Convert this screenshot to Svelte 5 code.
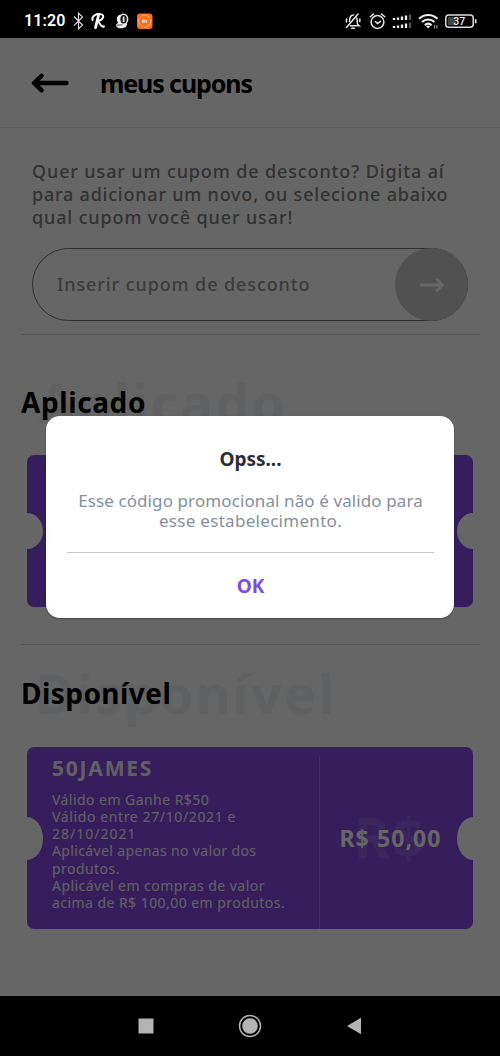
<script lang="ts">
  type Coupon = {
    code: string;
    lines: string[];
    value: string;
  };

  const coupon: Coupon = {
    code: '50JAMES',
    lines: [
      'Válido em Ganhe R$50',
      'Válido entre 27/10/2021 e',
      '28/10/2021',
      'Aplicável apenas no valor dos',
      'produtos.',
      'Aplicável em compras de valor',
      'acima de R$ 100,00 em produtos.'
    ],
    value: 'R$ 50,00'
  };

  let code = $state('');
  let dialogOpen = $state(true);

  function closeDialog() {
    dialogOpen = false;
  }

  function submit(e: SubmitEvent) {
    e.preventDefault();
    dialogOpen = true;
  }
</script>

<div class="phone">
  <!-- Status bar -->
  <div class="status">
    <span class="clock">11:20</span>
    <svg class="left-icons" width="82" height="20" viewBox="0 0 82 20" fill="none">
      <path d="M2 5.5l8.5 8.6-4 3.7V2.2l4 3.7L2 14.6" stroke="#ddd" stroke-width="1.2" />
      <g stroke="#fff" stroke-linecap="round" stroke-linejoin="round">
        <path d="M26.500 4.500l-3 12.200" stroke-width="2.800" />
        <path d="M20.500 9c-1-4 4-6.700 8.500-5.800 4 .8 2.500 6-3.500 6.800 2.500.5 2.500 6.800 6.500 5.500" stroke-width="2" />
      </g>
      <path d="M48.500 3.500c-4 1-4.500 5.500-2.300 8.300-.8.800-2.200 1.200-2.200 2.200 0 2.600 3 3.600 6 3.300 3.500-.4 5-2.500 5.300-4.300z" fill="#eee" />
      <ellipse cx="51.600" cy="8.300" rx="4" ry="5" fill="#111" stroke="#eee" stroke-width="1.600" />
      <path d="M51.600 5.500v5.600" stroke="#eee" stroke-width="1.800" />
      <path d="M44.500 14.200l6-.4" stroke="#111" stroke-width=".7" />
      <rect x="65" y="2.500" width="15.500" height="15.500" rx="3" fill="#f8701c" />
      <circle cx="72.700" cy="10.200" r="6" stroke="#ffc49a" stroke-width=".9" stroke-dasharray="10 1.500" />
      <path d="M70.500 11.700V9h2.300v2.700M74.600 9v2.700M71.700 10v1.700" stroke="#fff" stroke-width=".8" />
    </svg>
    <svg class="right-icons" width="134" height="20" viewBox="0 0 134 20" fill="none">
      <!-- muted bell -->
      <g stroke="#e8e8e8" stroke-width="1.500" stroke-linecap="round">
        <path d="M2.500 16.500L14 3M5.500 10.500c0-4 1.500-6.500 4-6.500M12.800 7c.4 1.500.3 4.500.8 6 .4 1 1 1.500 1.400 1.800H6.500M2.500 8v3M15.800 8v2.500" />
        <path d="M7.800 17.200h2.600" stroke-width="1.600" />
      </g>
      <!-- alarm -->
      <circle cx="33.500" cy="11" r="6.400" stroke="#e8e8e8" stroke-width="1.500" />
      <path d="M31.300 10.500l2.200 2 3-2.200M26.300 5.800l3.300-2.800M40.800 5.800L37.500 3" stroke="#e8e8e8" stroke-width="1.500" stroke-linecap="round" />
      <!-- dual sim signal -->
      <g stroke="#eee" stroke-width="2.300">
        <path d="M50 9V7M54 9V6.500M58 9V5.500M62 9V4.500M50 17v-2M54 17v-2.500M58 17v-3.500M62 17v-4.500" />
        <path d="M66 9V3.500M66 17v-5.500" stroke="#555" />
      </g>
      <!-- wifi -->
      <g stroke="#f2f2f2" stroke-width="2.100">
        <path d="M75 7.700c5.500-5 13-5 18.500 0M78 11c3.700-3.400 8.800-3.400 12.500 0M80.900 14.200c2-1.900 4.700-1.900 6.700 0" />
        <path d="M82.200 15.200l2 2.300 2-2.300c-1.200-.9-2.800-.9-4 0z" fill="#f2f2f2" stroke="none" />
        <path d="M90.500 14v3.500M92.800 17.500V14" stroke="#888" stroke-width="1.300" />
      </g>
      <!-- battery -->
      <rect x="101.800" y="4" width="27.400" height="12.300" rx="3" stroke="#ddd" stroke-width="1.500" />
      <rect x="103.800" y="6" width="8" height="8.300" rx="1" fill="#444" />
      <path d="M131.700 8.300v4" stroke="#ddd" stroke-width="1.700" />
      <text x="115.300" y="14" text-anchor="middle" class="battery">37</text>
    </svg>
  </div>

  <div class="screen">
    <header>
      <button class="back" aria-label="Voltar">
        <svg width="38" height="20" viewBox="0 0 38 20" fill="none">
          <path d="M35.500 10H3M10.500 2.800L3 10l7.500 7.200" stroke="#000" stroke-width="4.400" stroke-linecap="round" stroke-linejoin="round" />
        </svg>
      </button>
      <h1>meus cupons</h1>
    </header>

    <form onsubmit={submit}>
      <p class="intro">
        <span class="i1">Quer usar um cupom de desconto? Digita aí</span>
        <span class="i2">para adicionar um novo, ou selecione abaixo</span>
        <span class="i3">qual cupom você quer usar!</span>
      </p>
      <div class="field">
        <input bind:value={code} placeholder="Inserir cupom de desconto" />
        <button class="send" aria-label="Adicionar cupom">
          <svg width="26" height="16" viewBox="0 0 26 16" fill="none">
            <path d="M2 8h21.500M18 2.500L23.500 8 18 13.500" stroke="#fff" stroke-width="2.800" stroke-linecap="round" stroke-linejoin="round" />
          </svg>
        </button>
      </div>
    </form>

    <section class="applied">
      <h2><span class="ghost" aria-hidden="true">Aplicado</span><span class="title">Aplicado</span></h2>
      <div class="ticket short"></div>
    </section>

    <section class="available">
      <h2><span class="ghost" aria-hidden="true">Disponível</span><span class="title">Disponível</span></h2>
      <div class="ticket">
        <div class="info">
          <div class="code">{coupon.code}</div>
          <div class="rules">
            {#each coupon.lines as line}
              <div>{line}</div>
            {/each}
          </div>
        </div>
        <div class="amount">
          <span class="currency" aria-hidden="true">R$</span>
          <span class="value">{coupon.value}</span>
        </div>
      </div>
    </section>

    {#if dialogOpen}
      <div class="backdrop">
        <div class="dialog" role="alertdialog">
          <h3>Opss...</h3>
          <p>
            <span class="d1">Esse código promocional não é valido para</span>
            <span class="d2">esse estabelecimento.</span>
          </p>
          <button class="ok" onclick={closeDialog}>OK</button>
        </div>
      </div>
    {/if}
  </div>

  <!-- System navigation -->
  <div class="nav">
    <svg width="18" height="18" viewBox="0 0 18 18"><rect x="1.500" y="1.500" width="15" height="15" fill="#b4b4b4" /></svg>
    <svg width="24" height="24" viewBox="0 0 24 24">
      <circle cx="12" cy="12" r="10.500" fill="none" stroke="#b4b4b4" stroke-width="1.500" />
      <circle cx="12" cy="12" r="7.800" fill="#b4b4b4" />
    </svg>
    <svg width="18" height="18" viewBox="0 0 18 18"><path d="M2 9L16 .8v16.400z" fill="#b4b4b4" /></svg>
  </div>
</div>

<style>
  :global(body) {
    background: #000;
  }

  .phone {
    width: 500px;
    height: 1056px;
    display: flex;
    flex-direction: column;
    overflow: hidden;
    font-family: 'Noto Sans', sans-serif;
    background: #000;
  }

  .phone * {
    box-sizing: border-box;
  }

  button,
  input {
    font-family: inherit;
    border: none;
    padding: 0;
    background: none;
  }

  h1,
  h2,
  h3,
  p {
    margin: 0;
  }

  p span {
    display: block;
    white-space: nowrap;
  }

  .status {
    height: 38px;
    flex-shrink: 0;
    display: flex;
    align-items: center;
    padding: 3px 22px 0 24px;
  }

  .clock {
    width: 48px;
    font-family: Roboto, sans-serif;
    font-size: 16px;
    font-weight: 600;
    letter-spacing: 0.1px;
    color: #fff;
  }

  .right-icons {
    margin-left: auto;
  }

  .battery {
    font-family: Roboto, sans-serif;
    font-size: 10.5px;
    font-weight: 500;
    fill: #eee;
  }

  .screen {
    position: relative;
    height: 957.5px;
    flex-shrink: 0;
    background: #fff;
  }

  header {
    height: 90px;
    display: flex;
    align-items: center;
    padding-left: 31px;
    border-bottom: 1px solid #e6e6e6;
  }

  .back {
    display: flex;
    width: 69px;
  }

  h1 {
    font-size: 25px;
    font-weight: 700;
    line-height: 30px;
    letter-spacing: -1.1px;
    color: #000;
  }

  form {
    height: 207px;
    margin: 0 20px 0 21px;
    padding: 32px 12px 0 11px;
    border-bottom: 1px solid #d6d6d6;
  }

  .intro {
    font-size: 18px;
    font-weight: 500;
    line-height: 23px;
    color: #808080;
  }

  .i1 {
    letter-spacing: 0.87px;
  }

  .i2 {
    letter-spacing: 0.78px;
  }

  .i3 {
    letter-spacing: 0.87px;
  }

  .field {
    display: flex;
    height: 73px;
    margin-top: 19px;
    border: 1px solid #777;
    border-radius: 37px;
  }

  input {
    flex: 1;
    min-width: 0;
    padding: 0 0 1px 24px;
    font-size: 18px;
    font-weight: 500;
    letter-spacing: 0.9px;
    outline: none;
  }

  input::placeholder {
    color: #969696;
    opacity: 1;
  }

  .send {
    width: 73px;
    height: 73px;
    margin: -1px;
    border-radius: 50%;
    background: #cacaca;
    display: flex;
    align-items: center;
    justify-content: center;
  }

  h2 {
    display: grid;
    align-items: baseline;
    line-height: 70px;
    height: 70px;
    white-space: nowrap;
  }

  h2 span {
    grid-area: 1 / 1;
  }

  .ghost {
    font-size: 54px;
    font-weight: 700;
    color: #f1f3f6;
    padding: 0 0 0 17px;
    letter-spacing: 2.2px;
  }

  .available .ghost {
    padding-left: 14px;
    letter-spacing: 2px;
  }

  .title {
    position: relative;
    top: -10px;
    font-size: 28px;
    font-weight: 700;
    letter-spacing: 0.6px;
    color: #000;
  }

  .available .title {
    letter-spacing: 0.45px;
  }

  .applied {
    height: 310px;
    margin: 0 20px 0 21px;
    padding-top: 32px;
    border-bottom: 1px solid #d6d6d6;
  }

  .available {
    margin: 0 20px 0 21px;
    padding-top: 13px;
  }

  .ticket {
    position: relative;
    display: flex;
    height: 182px;
    margin: 19px 7px 0 6px;
    border-radius: 7px;
    overflow: hidden;
    background: #874de6;
  }

  .ticket.short {
    height: 152px;
    margin-top: 18px;
  }

  /* side notches */
  .ticket::before,
  .ticket::after {
    content: '';
    position: absolute;
    left: 0;
    top: calc(50% - 21.5px);
    width: 16px;
    height: 43px;
    border-radius: 0 16px 16px 0 / 0 50% 50% 0;
    background: #fff;
  }

  .ticket::after {
    left: auto;
    right: 0;
    transform: scaleX(-1);
  }

  .ticket.short::before,
  .ticket.short::after {
    top: calc(50% - 18px);
    height: 36px;
  }

  .info {
    width: 293px;
    margin-top: 9px;
    padding-left: 25px;
    border-right: 1px solid #a57de9;
    white-space: nowrap;
    color: #f4effb;
  }

  .code {
    height: 35px;
    font-size: 21px;
    font-weight: 700;
    line-height: 24px;
    letter-spacing: 1.8px;
  }

  .rules {
    font-size: 14px;
    line-height: 17.15px;
    letter-spacing: 0.45px;
  }

  .rules div:nth-child(2) {
    letter-spacing: 0.62px;
  }

  .rules div:nth-child(3) {
    letter-spacing: 1px;
  }

  .rules div:nth-child(4) {
    letter-spacing: 0.36px;
  }

  .amount {
    flex: 1;
    display: grid;
    place-items: center;
    padding-right: 12px;
  }

  .amount span {
    grid-area: 1 / 1;
    white-space: nowrap;
  }

  .currency {
    font-size: 55px;
    font-weight: 700;
    line-height: 60px;
    padding-bottom: 2px;
    letter-spacing: 3px;
    color: #955fe8;
  }

  .value {
    font-size: 23px;
    font-weight: 700;
    letter-spacing: 1.1px;
    padding-bottom: 1px;
    color: #fff;
  }

  .backdrop {
    position: absolute;
    inset: 0;
    background: rgba(0, 0, 0, 0.6);
    display: flex;
    justify-content: center;
    align-items: flex-start;
    padding-top: 378px;
  }

  .dialog {
    width: 408px;
    height: 202px;
    padding: 30px 20px 0 21px;
    border-radius: 14px;
    background: #fff;
    text-align: center;
    box-shadow: 0 1px 2px rgba(0, 0, 0, 0.3);
  }

  h3 {
    font-size: 19px;
    font-weight: 700;
    line-height: 26px;
    color: #2c2c34;
  }

  .dialog p {
    height: 81px;
    padding-top: 19px;
    font-size: 17px;
    line-height: 20.2px;
    color: #86909a;
    border-bottom: 1px solid #c3c8d2;
  }

  .d1 {
    letter-spacing: 0.1px;
  }

  .d2 {
    letter-spacing: 0.3px;
  }

  .ok {
    width: 100%;
    height: 66px;
    font-size: 19px;
    font-weight: 700;
    color: #804cd9;
  }

  .nav {
    flex: 1;
    display: flex;
    align-items: center;
    justify-content: center;
    gap: 83px;
  }
</style>
